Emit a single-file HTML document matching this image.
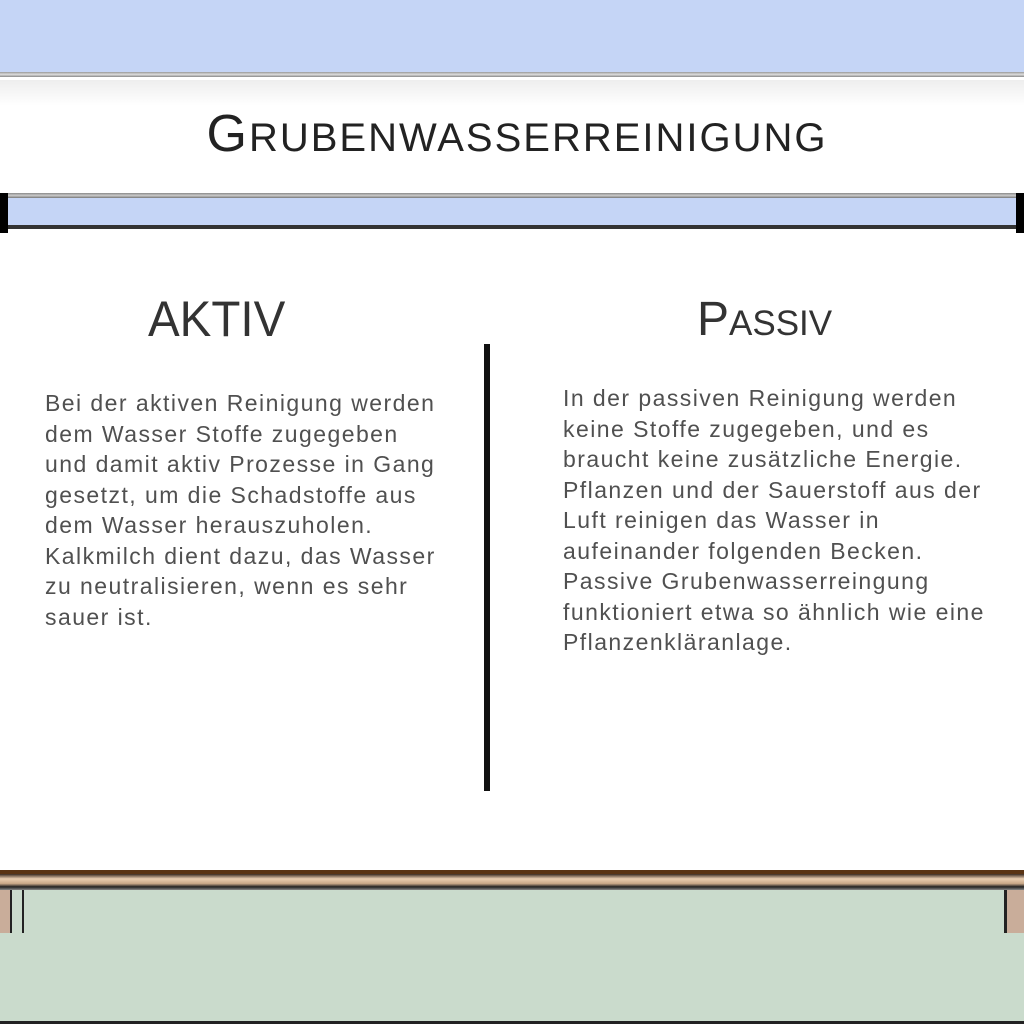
<!DOCTYPE html>
<html><head><meta charset="utf-8"><style>
*{margin:0;padding:0;box-sizing:border-box}
body{width:1024px;height:1024px;overflow:hidden;position:relative;background:#fff;font-family:"Liberation Sans",sans-serif}
.a{position:absolute}
.t{position:absolute;white-space:nowrap;color:#505050;font-size:23px;letter-spacing:1.45px;line-height:30.5px}
</style></head><body>
<div class="a" style="left:0;top:0;width:1024px;height:72px;background:#c5d5f6"></div>
<div class="a" style="left:0;top:72px;width:1024px;height:5px;background:linear-gradient(#999,#ddd,#888)"></div>
<div class="a" style="left:0;top:80px;width:1024px;height:26px;background:linear-gradient(#eee,#fff)"></div>
<div class="a" style="left:0;top:193px;width:1024px;height:5px;background:linear-gradient(#888,#ccc,#777)"></div>
<div class="a" style="left:0;top:198px;width:1024px;height:30px;background:#c5d5f6"></div>
<div class="a" style="left:0;top:225px;width:1024px;height:4px;background:#333"></div>
<div class="a" style="left:0;top:193px;width:8px;height:40px;background:#000"></div>
<div class="a" style="left:1016px;top:193px;width:8px;height:40px;background:#000"></div>

<div class="a" style="left:5px;top:104px;width:1024px;text-align:center;color:#222;white-space:nowrap"><span style="display:inline-block;letter-spacing:2px"><span style="font-size:52px">G</span><span style="font-size:40px">RUBENWASSERREINIGUNG</span></span></div>

<div class="a" style="left:148px;top:290px;color:#333;font-size:50px;white-space:nowrap;transform:scaleX(0.95);transform-origin:left">AKTIV</div>
<div class="a" style="left:697px;top:292px;color:#333;white-space:nowrap"><span style="font-size:48px">P</span><span style="font-size:35px">ASSIV</span></div>

<div class="a" style="left:484px;top:344px;width:6px;height:447px;background:#111"></div>

<div class="t" style="left:45px;top:388px">Bei der aktiven Reinigung werden<br>dem Wasser Stoffe zugegeben<br>und damit aktiv Prozesse in Gang<br>gesetzt, um die Schadstoffe aus<br>dem Wasser herauszuholen.<br>Kalkmilch dient dazu, das Wasser<br>zu neutralisieren, wenn es sehr<br>sauer ist.</div>

<div class="t" style="left:563px;top:383px">In der passiven Reinigung werden<br>keine Stoffe zugegeben, und es<br>braucht keine zusätzliche Energie.<br>Pflanzen und der Sauerstoff aus der<br>Luft reinigen das Wasser in<br>aufeinander folgenden Becken.<br>Passive Grubenwasserreingung<br>funktioniert etwa so ähnlich wie eine<br>Pflanzenkläranlage.</div>

<div class="a" style="left:0;top:870px;width:1024px;height:4px;background:#5a3414"></div>
<div class="a" style="left:0;top:874px;width:1024px;height:16px;background:linear-gradient(#3a2a20,#e9cdb0 30%,#c9a888 60%,#222 80%,#888)"></div>
<div class="a" style="left:0;top:890px;width:1024px;height:134px;background:#cadbcc"></div>
<div class="a" style="left:0;top:890px;width:12px;height:43px;background:#c9ad9a;border-right:2px solid #222"></div>
<div class="a" style="left:12px;top:890px;width:12px;height:43px;border-right:2px solid #222"></div>
<div class="a" style="left:1004px;top:890px;width:20px;height:43px;background:#c9ad9a;border-left:3px solid #222"></div>
<div class="a" style="left:0;top:1021px;width:1024px;height:3px;background:#222"></div>
</body></html>
